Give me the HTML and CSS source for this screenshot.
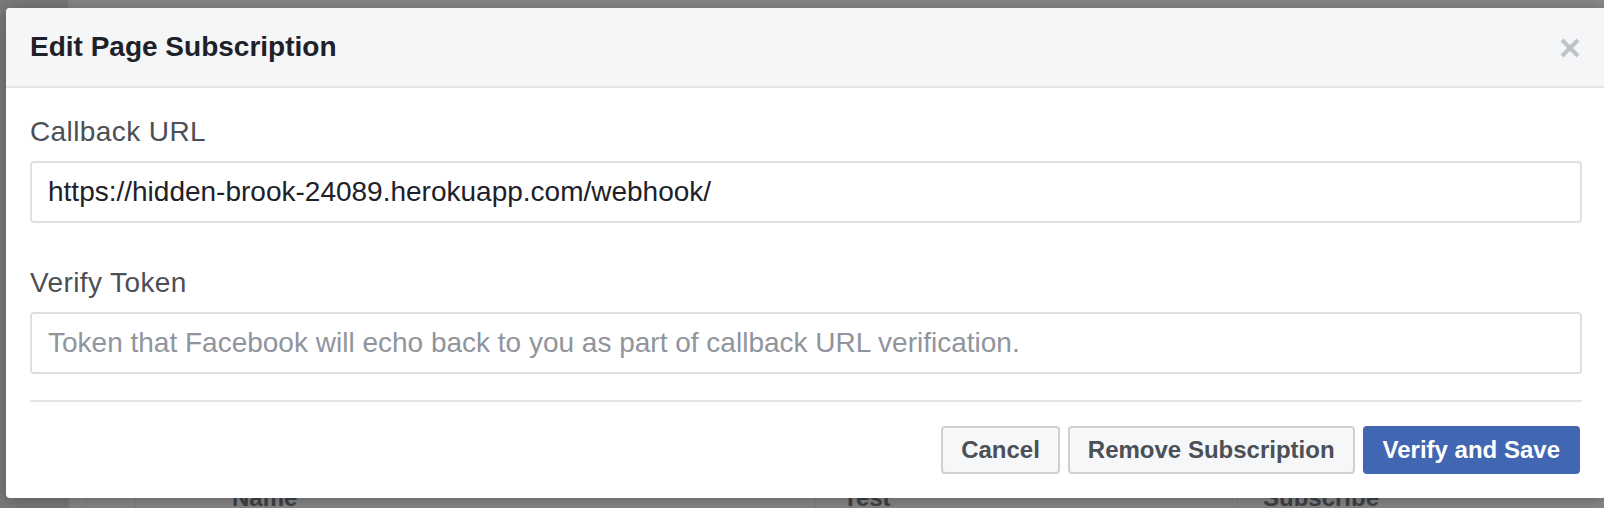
FILE: index.html
```html
<!DOCTYPE html>
<html lang="en">
<head>
<meta charset="utf-8">
<title>Edit Page Subscription</title>
<link rel="stylesheet" href="styles.css">
</head>
<body>
<div class="page">
  <div class="sidebar"></div>
  <div class="main">
    <div class="table-row">
      <div class="cell c-gap"></div>
      <div class="cell c-check"></div>
      <div class="cell c-name">Name</div>
      <div class="cell c-test">Test</div>
      <div class="cell c-sub">Subscribe</div>
    </div>
  </div>
</div>

<div class="modal">
  <div class="modal-header">
    <h1 class="modal-title">Edit Page Subscription</h1>
    <button class="close" aria-label="Close">
      <svg width="20" height="20" viewBox="0 0 20 20"><path d="M2 2 L18 18 M18 2 L2 18" stroke="#bec2c9" stroke-width="4" stroke-linecap="butt"/></svg>
    </button>
  </div>
  <div class="modal-body">
    <div class="field">
      <label class="label">Callback URL</label>
      <input class="input" type="text" value="https://hidden-brook-24089.herokuapp.com/webhook/">
    </div>
    <div class="field field-second">
      <label class="label">Verify Token</label>
      <input class="input" type="text" placeholder="Token that Facebook will echo back to you as part of callback URL verification.">
    </div>
    <div class="separator"></div>
  </div>
  <div class="modal-footer">
    <button class="btn">Cancel</button>
    <button class="btn">Remove Subscription</button>
    <button class="btn btn-primary">Verify and Save</button>
  </div>
</div>
</body>
</html>
```
FILE: styles.css
```css
html, body {
  margin: 0;
  padding: 0;
  width: 1604px;
  height: 508px;
  overflow: hidden;
  font-family: "Liberation Sans", Arial, Helvetica, sans-serif;
}

.page {
  display: flex;
  width: 1604px;
  height: 508px;
  background: #898989;
}

.sidebar {
  width: 68px;
  flex: none;
  background: #7b7b7b;
}

.main {
  flex: 1;
  display: flex;
  flex-direction: column;
  justify-content: flex-end;
  overflow: hidden;
}

.table-row {
  display: flex;
  height: 34px;
  margin-bottom: -7px;
  font-size: 24px;
  line-height: 34px;
  font-weight: bold;
  color: #3f4349;
}

.cell {
  flex: none;
  box-sizing: border-box;
}

.c-gap { width: 18px; border-left: 1px solid #7f7f7f; }
.c-check { width: 49px; border-left: 1px solid #7f7f7f; }
.c-name { width: 680px; border-left: 1px solid #7f7f7f; padding-left: 96px; }
.c-test { width: 422px; border-left: 1px solid #7f7f7f; padding-left: 27px; }
.c-sub { flex: 1; border-left: 1px solid #7f7f7f; padding-left: 25px; }

.modal {
  position: absolute;
  top: 8px;
  left: 6px;
  width: 1600px;
  background: #ffffff;
  border-radius: 4px;
  box-shadow: 0 2px 20px rgba(0, 0, 0, 0.3);
  overflow: hidden;
}

.modal-header {
  display: flex;
  align-items: center;
  justify-content: space-between;
  height: 78px;
  padding: 0 26px 0 24px;
  background: #f5f6f7;
  border-bottom: 2px solid #e5e5e5;
}

.modal-title {
  margin: 0;
  font-size: 28px;
  line-height: 34px;
  font-weight: bold;
  color: #1d2129;
}

.close {
  border: 0;
  background: none;
  padding: 0;
  width: 20px;
  height: 20px;
  display: flex;
  margin-top: 1px;
}

.modal-body {
  padding: 27px 24px 0 24px;
}

.field {
  display: flex;
  flex-direction: column;
}

.field-second {
  margin-top: 43px;
}

.label {
  font-size: 28px;
  line-height: 34px;
  letter-spacing: 0.4px;
  color: #4b4f56;
  margin-bottom: 12px;
}

.input {
  box-sizing: border-box;
  height: 62px;
  width: 100%;
  margin: 0;
  padding: 0 16px;
  border: 2px solid #dddfe2;
  border-radius: 4px;
  background: #ffffff;
  font-family: "Liberation Sans", Arial, Helvetica, sans-serif;
  font-size: 28px;
  color: #1d2129;
  outline: none;
}

.input::placeholder {
  color: #90949c;
  opacity: 1;
}

.separator {
  margin-top: 26px;
  height: 2px;
  background: #e5e5e5;
}

.modal-footer {
  display: flex;
  justify-content: flex-end;
  gap: 8px;
  padding: 24px 26px 24px 24px;
}

.btn {
  box-sizing: border-box;
  height: 48px;
  padding: 0 18px;
  border: 2px solid #ced0d4;
  border-radius: 4px;
  background: #f6f7f9;
  font-family: "Liberation Sans", Arial, Helvetica, sans-serif;
  font-size: 24px;
  font-weight: bold;
  color: #4b4f56;
}

.btn-primary {
  background: #4267b2;
  border-color: #4267b2;
  color: #ffffff;
}
```
